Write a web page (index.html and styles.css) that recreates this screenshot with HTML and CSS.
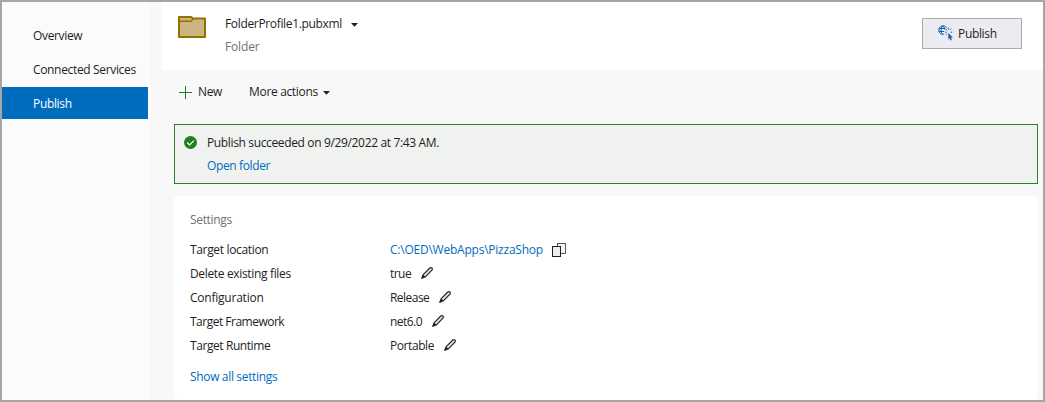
FILE: index.html
```html
<!DOCTYPE html>
<html lang="en">
<head>
<meta charset="utf-8">
<title>Publish</title>
<link rel="stylesheet" href="styles.css">
</head>
<body>
<div class="window">
  <nav class="sidebar">
    <a class="nav-item"><span class="t-overview">Overview</span></a>
    <a class="nav-item"><span class="t-services">Connected Services</span></a>
    <a class="nav-item selected"><span class="t-publish">Publish</span></a>
  </nav>
  <main class="main">
    <header class="profile">
      <svg class="folder" width="28" height="22" viewBox="0 0 28 22"><path d="M1 1H13.5L14.5 2.5H27V21H1Z" fill="#cbb681" stroke="#966f00" stroke-width="2" stroke-linejoin="round"/><path d="M1 5.3H13L15 3.3" fill="none" stroke="#966f00" stroke-width="1.5"/></svg>
      <div class="profile-text">
        <div class="profile-name"><span class="t-profile">FolderProfile1.pubxml</span><svg class="caret" width="7" height="4" viewBox="0 0 7 4"><path d="M0 0H7L3.5 3.8Z"/></svg></div>
        <div class="muted"><span class="t-folder">Folder</span></div>
      </div>
      <button class="publish-button">
        <svg width="16" height="16" viewBox="0 0 16 16"><g fill="none" stroke="#0f62b8"><path d="M8.6 2.6A4.3 4.3 0 1 0 5.8 9.3"/><path d="M4.6 .9C2.6 3.4 2.6 6.9 4.6 9.3M5 .9Q6.6 2.6 6.7 4.6M.8 3.5H7.4M.8 6.5H6.2"/><path d="M10.2 2.8V4.6M13.2 3.6L11.9 5M7.8 4.2L9 5.4M7.2 7.2H8.8M7.8 9.8L9 8.6M12.6 7.2H14.2"/></g><path d="M10.3 7.9L14.8 12.5L13 12.8L13.9 15.1L12.7 15.6L11.7 13.3L10.3 14.7Z" fill="#0f62b8"/></svg>
        <span class="t-button">Publish</span>
      </button>
    </header>
    <div class="toolbar">
      <div class="action new"><svg width="13" height="13" viewBox="0 0 13 13"><path d="M0 6.5H13M6.5 0V13" stroke="#1f801f"/></svg><span class="t-new">New</span></div>
      <div class="action more"><span class="t-more">More actions</span><svg class="caret" width="7" height="4" viewBox="0 0 7 4"><path d="M0 0H7L3.5 3.8Z"/></svg></div>
    </div>
    <section class="banner">
      <svg width="13" height="13" viewBox="0 0 13 13"><circle cx="6.5" cy="6.5" r="6.5" fill="#1f801f"/><path d="M3.2 6.5L5.6 8.9L9.9 4.6" fill="none" stroke="#fff" stroke-width="1.1"/></svg>
      <div>
        <div class="banner-line"><span class="t-success">Publish succeeded on 9/29/2022 at 7:43 AM.</span></div>
        <div class="banner-line link"><span class="t-open">Open folder</span></div>
      </div>
    </section>
    <section class="settings">
      <h2 class="muted"><span class="t-settings">Settings</span></h2>
      <dl>
        <div class="row"><dt><span class="t-location">Target location</span></dt><dd><span class="link t-path">C:\OED\WebApps\PizzaShop</span><svg class="copy" width="14" height="14" viewBox="0 0 14 14"><rect x="5.5" y=".5" width="8" height="10" fill="#f4f4f4" stroke="#555"/><rect x=".5" y="3.5" width="8" height="10" fill="#eee" stroke="#212121"/></svg></dd></div>
        <div class="row"><dt><span class="t-delete">Delete existing files</span></dt><dd><span class="t-true">true</span><svg class="pencil" width="12" height="12" viewBox="0 0 12 12"><use href="#pencil"/></svg></dd></div>
        <div class="row"><dt><span class="t-config">Configuration</span></dt><dd><span class="t-release">Release</span><svg class="pencil" width="12" height="12" viewBox="0 0 12 12"><use href="#pencil"/></svg></dd></div>
        <div class="row"><dt><span class="t-framework">Target Framework</span></dt><dd><span class="t-net">net6.0</span><svg class="pencil" width="12" height="12" viewBox="0 0 12 12"><use href="#pencil"/></svg></dd></div>
        <div class="row"><dt><span class="t-runtime">Target Runtime</span></dt><dd><span class="t-portable">Portable</span><svg class="pencil" width="12" height="12" viewBox="0 0 12 12"><use href="#pencil"/></svg></dd></div>
      </dl>
      <a class="link show-all"><span class="t-show">Show all settings</span></a>
    </section>
  </main>
</div>
<svg class="defs" width="0" height="0"><defs><g id="pencil"><path d="M.8 11.2L2.2 7.6L8.8 1Q10 .2 11 1Q11.8 2 11 3.2L4.4 9.8Z" fill="#dcdcdc" stroke="#212121" stroke-width="1.1" stroke-linejoin="round"/><path d="M.3 11.7L2 7.6L4.4 10Z" fill="#212121"/></g></defs></svg>
</body>
</html>
```
FILE: styles.css
```css
* { box-sizing: border-box; }
body { margin: 0; overflow: hidden; color: #1e1e1e; font: 12px/16px "Open Sans", "Noto Sans", sans-serif; }
span { white-space: nowrap; letter-spacing: -.34px; }
svg { display: block; flex: none; }
.defs { display: none; }
.window { display: flex; width: 1045px; height: 402px; border: 2px solid #a6a6a6; background: #f8f8f8; }
.sidebar { width: 148px; padding-top: 17px; background: #fbfbfb; display: flex; flex-direction: column; gap: 2px; }
.nav-item { display: flex; align-items: center; width: 146px; height: 32px; padding: 2px 0 0 31px; }
.selected { background: #006cbe; color: #fff; }
.main { width: 893px; padding-left: 12px; }
.profile { display: flex; height: 68px; padding: 14px 21px 0 16px; background: #fff; border-radius: 0 0 0 4px; }
.profile-text { margin-left: 19px; flex: 1; }
.profile-name { display: flex; align-items: center; height: 16px; gap: 9px; }
.profile-text .muted { margin-top: 7px; }
.muted { color: #717171; }
.caret { fill: #212121; margin-top: 1px; }
.publish-button { display: flex; align-items: center; gap: 4px; width: 100px; height: 31px; margin-top: 2px; padding: 0 0 1px 15px; color: #1e1e1e; background: #ececf0; border: 1px solid #acacac; font: inherit; }
.publish-button svg { margin-bottom: 1px; }
.publish-button span { padding-top: 1px; }
.toolbar { display: flex; gap: 27px; height: 54px; padding: 14px 0 0 17px; }
.action { display: flex; align-items: center; height: 16px; gap: 6px; }
.more { gap: 5px; }
.banner { display: flex; gap: 10px; width: 864px; height: 60px; margin-left: 12px; padding: 10px 9px; border: 1px solid #2d8034; background: #f0f2ef; }
.banner > svg { margin-top: 1px; }
.banner-line { height: 23px; }
.link { color: #006cbe; }
.settings { width: 864px; height: 204px; margin: 12px 0 0 12px; padding: 16px; border-radius: 4px; background: #fff; }
h2 { margin: 0; font: inherit; }
dl { margin: 10px 0 0; }
.row { display: flex; height: 24px; align-items: center; }
dt { width: 200px; }
dd { display: flex; align-items: center; gap: 10px; margin: 0; }
.copy { margin: 0 0 1px -1px; }
.pencil { margin-bottom: 2px; }
.show-all { display: block; margin-top: 11px; }
.t-folder { letter-spacing: -.16px; }
.t-success { letter-spacing: -.355px; }
.t-open { letter-spacing: -.37px; }
.t-path { letter-spacing: -.23px; }
.t-config { letter-spacing: -.23px; }
.t-framework { letter-spacing: -.5px; }
.t-runtime, .t-portable { letter-spacing: -.42px; }
.t-release, .t-net, .t-true { letter-spacing: -.54px; }
```
